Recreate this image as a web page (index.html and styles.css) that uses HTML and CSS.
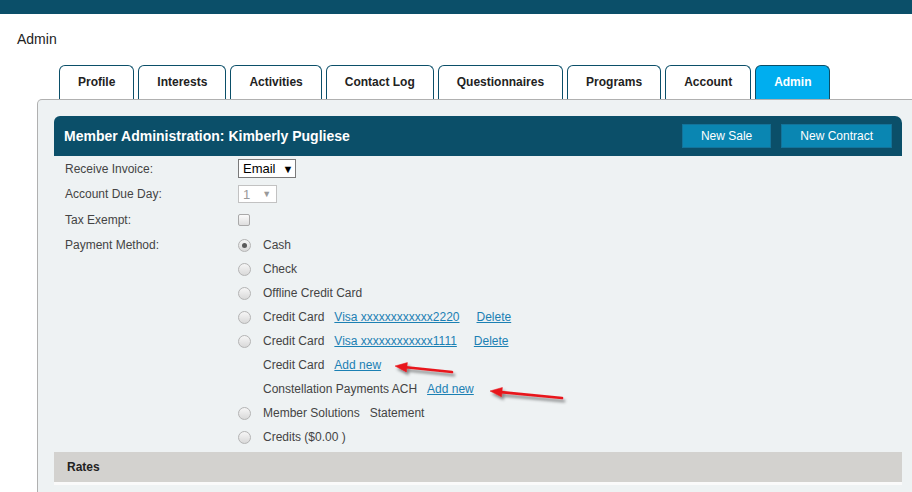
FILE: index.html
```html
<!DOCTYPE html>
<html lang="en">
<head>
<meta charset="utf-8">
<title>Admin</title>
<link rel="stylesheet" href="styles.css">
</head>
<body>
<div class="topbar"></div>
<div class="page-title">Admin</div>

<nav class="tabs">
  <a class="tab">Profile</a>
  <a class="tab">Interests</a>
  <a class="tab">Activities</a>
  <a class="tab">Contact Log</a>
  <a class="tab">Questionnaires</a>
  <a class="tab">Programs</a>
  <a class="tab">Account</a>
  <a class="tab active">Admin</a>
</nav>

<div class="panel">
  <div class="panel-head">
    <h2 class="panel-title">Member Administration: Kimberly Pugliese</h2>
    <div class="actions">
      <button class="btn">New Sale</button>
      <button class="btn">New Contract</button>
    </div>
  </div>

  <div class="form">
    <div class="row row-first">
      <div class="label">Receive Invoice:</div>
      <div class="value"><span class="select"><span class="select-text">Email</span><span class="caret">&#9660;</span></span></div>
    </div>
    <div class="row row-tall">
      <div class="label">Account Due Day:</div>
      <div class="value"><span class="select select-disabled"><span class="select-text">1</span><span class="caret">&#9660;</span></span></div>
    </div>
    <div class="row row-tall">
      <div class="label">Tax Exempt:</div>
      <div class="value"><span class="checkbox"></span></div>
    </div>
    <div class="row">
      <div class="label">Payment Method:</div>
      <div class="value option"><span class="radio checked"></span><span class="opt-text">Cash</span></div>
    </div>
    <div class="row">
      <div class="label"></div>
      <div class="value option"><span class="radio"></span><span class="opt-text">Check</span></div>
    </div>
    <div class="row">
      <div class="label"></div>
      <div class="value option"><span class="radio"></span><span class="opt-text">Offline Credit Card</span></div>
    </div>
    <div class="row">
      <div class="label"></div>
      <div class="value option"><span class="radio"></span><span class="opt-text">Credit Card</span><a class="link gap">Visa xxxxxxxxxxxx2220</a><a class="link gap-wide">Delete</a></div>
    </div>
    <div class="row">
      <div class="label"></div>
      <div class="value option"><span class="radio"></span><span class="opt-text">Credit Card</span><a class="link gap">Visa xxxxxxxxxxxx1111</a><a class="link gap-wide">Delete</a></div>
    </div>
    <div class="row">
      <div class="label"></div>
      <div class="value option indent"><span class="opt-text">Credit Card</span><a class="link gap">Add new</a></div>
    </div>
    <div class="row">
      <div class="label"></div>
      <div class="value option indent"><span class="opt-text">Constellation Payments ACH</span><a class="link gap">Add new</a></div>
    </div>
    <div class="row">
      <div class="label"></div>
      <div class="value option"><span class="radio"></span><span class="opt-text">Member Solutions</span><span class="opt-text gap">Statement</span></div>
    </div>
    <div class="row">
      <div class="label"></div>
      <div class="value option"><span class="radio"></span><span class="opt-text">Credits ($0.00 )</span></div>
    </div>
  </div>

  <div class="section-bar">Rates</div>
</div>

<svg class="annotations" width="912" height="492" viewBox="0 0 912 492" aria-hidden="true">
  <defs>
    <filter id="shadow" x="-20%" y="-100%" width="140%" height="300%">
      <feDropShadow dx="2" dy="3" stdDeviation="1.6" flood-color="#000" flood-opacity="0.45"/>
    </filter>
  </defs>
  <g filter="url(#shadow)" fill="#e8171c" stroke="#e8171c">
    <line x1="452" y1="372" x2="406" y2="367.2" stroke-width="2.6" stroke-linecap="round"/>
    <polygon points="395,366 407.4,362.6 406.4,371.9" stroke-width="0.5"/>
    <line x1="562" y1="398" x2="501" y2="392.1" stroke-width="2.6" stroke-linecap="round"/>
    <polygon points="490,391 502.4,387.5 501.5,396.8" stroke-width="0.5"/>
  </g>
</svg>
</body>
</html>
```

FILE: styles.css
```css
html, body {
  margin: 0;
  padding: 0;
  overflow: hidden;
  background: #ffffff;
}

body {
  position: relative;
  width: 912px;
  height: 492px;
  font-family: "Liberation Sans", Arial, sans-serif;
  color: #222;
}

.topbar {
  height: 14px;
  background: #0b4f69;
}

.page-title {
  margin-top: 17px;
  padding-left: 17px;
  font-size: 14px;
  line-height: 16px;
  color: #222;
}

.tabs {
  display: flex;
  gap: 4px;
  margin-top: 18px;
  margin-left: 59px;
  height: 34px;
}

.tab {
  display: block;
  box-sizing: border-box;
  height: 34px;
  padding: 0 18px;
  border: 1px solid #0b4f69;
  border-bottom: none;
  border-radius: 6px 6px 0 0;
  background: #fff;
  font-size: 12px;
  font-weight: bold;
  line-height: 33px;
  color: #222;
}

.tab.active {
  background: #00aeef;
  color: #fff;
}

.panel {
  box-sizing: content-box;
  width: 848px;
  margin-left: 37px;
  padding: 16px 16px 12px;
  border: 1px solid #b0b0b0;
  border-bottom: none;
  border-top-left-radius: 5px;
  background: #eef2f3;
}

.panel-head {
  display: flex;
  align-items: center;
  justify-content: space-between;
  height: 40px;
  padding: 0 10px;
  background: #0b4f69;
  border-radius: 6px 7px 0 0;
}

.panel-title {
  margin: 0;
  font-size: 14px;
  font-weight: bold;
  color: #fff;
}

.actions {
  display: flex;
  gap: 10px;
}

.btn {
  box-sizing: border-box;
  height: 24px;
  padding: 0 18px;
  border: 1px solid #13739a;
  background: #0a86b2;
  color: #fff;
  font-family: "Liberation Sans", Arial, sans-serif;
  font-size: 12px;
  line-height: 22px;
}

.form {
  padding-left: 11px;
}

.row {
  display: grid;
  grid-template-columns: 173px 1fr;
  align-items: center;
  height: 24px;
  font-size: 12px;
  color: #444;
}

.row-first {
  height: 25px;
}

.row-tall {
  height: 26px;
}

.value {
  display: flex;
  align-items: center;
}

.select {
  display: inline-flex;
  align-items: center;
  box-sizing: border-box;
  height: 19px;
  width: 58px;
  padding-left: 4px;
  border: 1px solid #7a7a7a;
  background: #fff;
  font-size: 13px;
  color: #000;
}

.select .caret {
  margin-left: 7px;
  font-size: 11px;
  color: #000;
}

.select-disabled {
  width: 39px;
  height: 18px;
  border-color: #c2c2c2;
  color: #9a9a9a;
}

.select-disabled .caret {
  margin-left: 12px;
  font-size: 9px;
  color: #9a9a9a;
}

.checkbox {
  display: inline-block;
  box-sizing: border-box;
  width: 12px;
  height: 12px;
  border: 1px solid #a9a9a9;
  border-radius: 2px;
  background: linear-gradient(#fbfbfb, #dedede);
}

.radio {
  position: relative;
  display: inline-block;
  box-sizing: border-box;
  width: 13px;
  height: 13px;
  margin-right: 12px;
  border: 1px solid #b4b4b4;
  border-radius: 50%;
  background: linear-gradient(#f6f6f6, #d9d9d9);
}

.radio.checked::after {
  content: "";
  position: absolute;
  left: 3px;
  top: 3px;
  width: 5px;
  height: 5px;
  border-radius: 50%;
  background: #5a5a5a;
}

.indent {
  padding-left: 25px;
}

.opt-text {
  color: #444;
  white-space: nowrap;
}

.link {
  color: #1b80b3;
  text-decoration: underline;
  white-space: nowrap;
}

.gap {
  margin-left: 10px;
}

.gap-wide {
  margin-left: 17px;
}

.section-bar {
  margin-top: 3px;
  height: 30px;
  padding-left: 13px;
  background: #d3d2cf;
  border-bottom: 3px solid #fafafa;
  font-size: 12px;
  font-weight: bold;
  line-height: 30px;
  color: #222;
}

.annotations {
  position: absolute;
  left: 0;
  top: 0;
  pointer-events: none;
}
```
